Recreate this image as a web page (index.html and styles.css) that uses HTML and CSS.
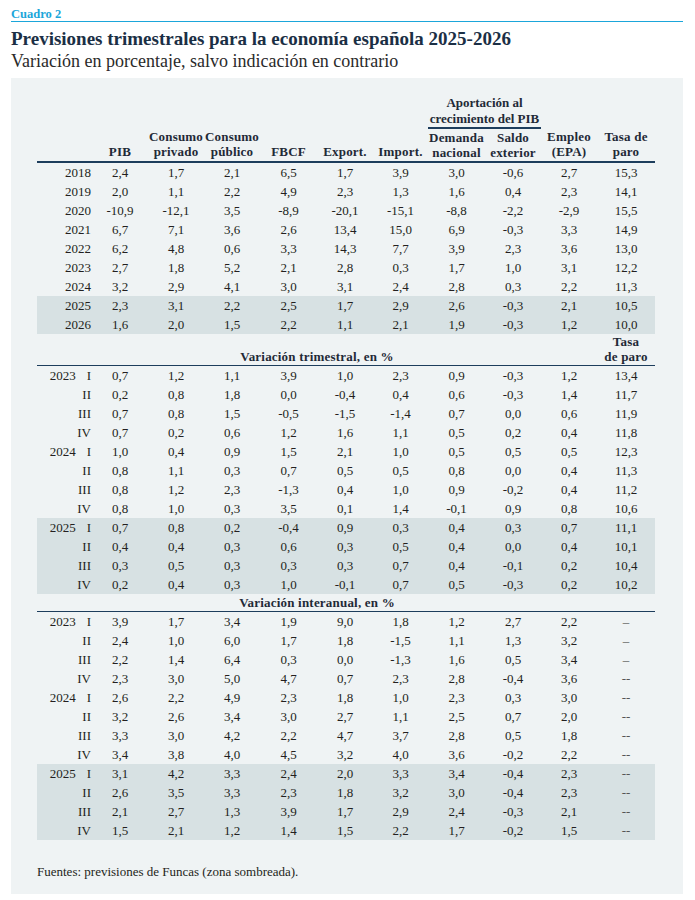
FILE: index.html
```html
<!DOCTYPE html>
<html lang="es">
<head>
<meta charset="utf-8">
<title>Cuadro 2</title>
<link rel="stylesheet" href="styles.css">
</head>
<body>
<div class="page">
  <div class="kicker">Cuadro 2</div>
  <h1 class="title">Previsiones trimestrales para la economía española 2025-2026</h1>
  <p class="subtitle">Variación en porcentaje, salvo indicación en contrario</p>
  <div class="panel">
    <table class="data">
      <colgroup>
        <col class="c-lab"><col class="c56"><col class="c56"><col class="c56"><col class="c57"><col class="c56"><col class="c55"><col class="c57"><col class="c56"><col class="c56"><col class="c58">
      </colgroup>
      <thead>
        <tr class="hr1">
          <th rowspan="2" class="hb"></th>
          <th rowspan="2" class="hb">PIB</th>
          <th rowspan="2" class="hb">Consumo<br>privado</th>
          <th rowspan="2" class="hb">Consumo<br>público</th>
          <th rowspan="2" class="hb">FBCF</th>
          <th rowspan="2" class="hb">Export.</th>
          <th rowspan="2" class="hb">Import.</th>
          <th colspan="2" class="group">Aportación al<br>crecimiento del PIB</th>
          <th rowspan="2" class="hb">Empleo<br>(EPA)</th>
          <th rowspan="2" class="hb">Tasa de<br>paro</th>
        </tr>
        <tr class="hr2">
          <th class="hb">Demanda<br>nacional</th>
          <th class="hb">Saldo<br>exterior</th>
        </tr>
      </thead>
      <tbody>
        <tr><td class="lab">2018</td><td>2,4</td><td>1,7</td><td>2,1</td><td>6,5</td><td>1,7</td><td>3,9</td><td>3,0</td><td>-0,6</td><td>2,7</td><td>15,3</td></tr>
        <tr><td class="lab">2019</td><td>2,0</td><td>1,1</td><td>2,2</td><td>4,9</td><td>2,3</td><td>1,3</td><td>1,6</td><td>0,4</td><td>2,3</td><td>14,1</td></tr>
        <tr><td class="lab">2020</td><td>-10,9</td><td>-12,1</td><td>3,5</td><td>-8,9</td><td>-20,1</td><td>-15,1</td><td>-8,8</td><td>-2,2</td><td>-2,9</td><td>15,5</td></tr>
        <tr><td class="lab">2021</td><td>6,7</td><td>7,1</td><td>3,6</td><td>2,6</td><td>13,4</td><td>15,0</td><td>6,9</td><td>-0,3</td><td>3,3</td><td>14,9</td></tr>
        <tr><td class="lab">2022</td><td>6,2</td><td>4,8</td><td>0,6</td><td>3,3</td><td>14,3</td><td>7,7</td><td>3,9</td><td>2,3</td><td>3,6</td><td>13,0</td></tr>
        <tr><td class="lab">2023</td><td>2,7</td><td>1,8</td><td>5,2</td><td>2,1</td><td>2,8</td><td>0,3</td><td>1,7</td><td>1,0</td><td>3,1</td><td>12,2</td></tr>
        <tr><td class="lab">2024</td><td>3,2</td><td>2,9</td><td>4,1</td><td>3,0</td><td>3,1</td><td>2,4</td><td>2,8</td><td>0,3</td><td>2,2</td><td>11,3</td></tr>
        <tr class="shade"><td class="lab">2025</td><td>2,3</td><td>3,1</td><td>2,2</td><td>2,5</td><td>1,7</td><td>2,9</td><td>2,6</td><td>-0,3</td><td>2,1</td><td>10,5</td></tr>
        <tr class="shade"><td class="lab">2026</td><td>1,6</td><td>2,0</td><td>1,5</td><td>2,2</td><td>1,1</td><td>2,1</td><td>1,9</td><td>-0,3</td><td>1,2</td><td>10,0</td></tr>
      </tbody>
      <tbody>
        <tr class="sec sec-tall"><th colspan="10">Variación trimestral, en %</th><th>Tasa<br>de paro</th></tr>
        <tr><td class="lab"><span class="yr">2023</span>I</td><td>0,7</td><td>1,2</td><td>1,1</td><td>3,9</td><td>1,0</td><td>2,3</td><td>0,9</td><td>-0,3</td><td>1,2</td><td>13,4</td></tr>
        <tr><td class="lab">II</td><td>0,2</td><td>0,8</td><td>1,8</td><td>0,0</td><td>-0,4</td><td>0,4</td><td>0,6</td><td>-0,3</td><td>1,4</td><td>11,7</td></tr>
        <tr><td class="lab">III</td><td>0,7</td><td>0,8</td><td>1,5</td><td>-0,5</td><td>-1,5</td><td>-1,4</td><td>0,7</td><td>0,0</td><td>0,6</td><td>11,9</td></tr>
        <tr><td class="lab">IV</td><td>0,7</td><td>0,2</td><td>0,6</td><td>1,2</td><td>1,6</td><td>1,1</td><td>0,5</td><td>0,2</td><td>0,4</td><td>11,8</td></tr>
        <tr><td class="lab"><span class="yr">2024</span>I</td><td>1,0</td><td>0,4</td><td>0,9</td><td>1,5</td><td>2,1</td><td>1,0</td><td>0,5</td><td>0,5</td><td>0,5</td><td>12,3</td></tr>
        <tr><td class="lab">II</td><td>0,8</td><td>1,1</td><td>0,3</td><td>0,7</td><td>0,5</td><td>0,5</td><td>0,8</td><td>0,0</td><td>0,4</td><td>11,3</td></tr>
        <tr><td class="lab">III</td><td>0,8</td><td>1,2</td><td>2,3</td><td>-1,3</td><td>0,4</td><td>1,0</td><td>0,9</td><td>-0,2</td><td>0,4</td><td>11,2</td></tr>
        <tr><td class="lab">IV</td><td>0,8</td><td>1,0</td><td>0,3</td><td>3,5</td><td>0,1</td><td>1,4</td><td>-0,1</td><td>0,9</td><td>0,8</td><td>10,6</td></tr>
        <tr class="shade"><td class="lab"><span class="yr">2025</span>I</td><td>0,7</td><td>0,8</td><td>0,2</td><td>-0,4</td><td>0,9</td><td>0,3</td><td>0,4</td><td>0,3</td><td>0,7</td><td>11,1</td></tr>
        <tr class="shade"><td class="lab">II</td><td>0,4</td><td>0,4</td><td>0,3</td><td>0,6</td><td>0,3</td><td>0,5</td><td>0,4</td><td>0,0</td><td>0,4</td><td>10,1</td></tr>
        <tr class="shade"><td class="lab">III</td><td>0,3</td><td>0,5</td><td>0,3</td><td>0,3</td><td>0,3</td><td>0,7</td><td>0,4</td><td>-0,1</td><td>0,2</td><td>10,4</td></tr>
        <tr class="shade"><td class="lab">IV</td><td>0,2</td><td>0,4</td><td>0,3</td><td>1,0</td><td>-0,1</td><td>0,7</td><td>0,5</td><td>-0,3</td><td>0,2</td><td>10,2</td></tr>
      </tbody>
      <tbody>
        <tr class="sec sec-short"><th colspan="10">Variación interanual, en %</th><th></th></tr>
        <tr><td class="lab"><span class="yr">2023</span>I</td><td>3,9</td><td>1,7</td><td>3,4</td><td>1,9</td><td>9,0</td><td>1,8</td><td>1,2</td><td>2,7</td><td>2,2</td><td class="na">–</td></tr>
        <tr><td class="lab">II</td><td>2,4</td><td>1,0</td><td>6,0</td><td>1,7</td><td>1,8</td><td>-1,5</td><td>1,1</td><td>1,3</td><td>3,2</td><td class="na">–</td></tr>
        <tr><td class="lab">III</td><td>2,2</td><td>1,4</td><td>6,4</td><td>0,3</td><td>0,0</td><td>-1,3</td><td>1,6</td><td>0,5</td><td>3,4</td><td class="na">–</td></tr>
        <tr><td class="lab">IV</td><td>2,3</td><td>3,0</td><td>5,0</td><td>4,7</td><td>0,7</td><td>2,3</td><td>2,8</td><td>-0,4</td><td>3,6</td><td class="na">--</td></tr>
        <tr><td class="lab"><span class="yr">2024</span>I</td><td>2,6</td><td>2,2</td><td>4,9</td><td>2,3</td><td>1,8</td><td>1,0</td><td>2,3</td><td>0,3</td><td>3,0</td><td class="na">--</td></tr>
        <tr><td class="lab">II</td><td>3,2</td><td>2,6</td><td>3,4</td><td>3,0</td><td>2,7</td><td>1,1</td><td>2,5</td><td>0,7</td><td>2,0</td><td class="na">--</td></tr>
        <tr><td class="lab">III</td><td>3,3</td><td>3,0</td><td>4,2</td><td>2,2</td><td>4,7</td><td>3,7</td><td>2,8</td><td>0,5</td><td>1,8</td><td class="na">--</td></tr>
        <tr><td class="lab">IV</td><td>3,4</td><td>3,8</td><td>4,0</td><td>4,5</td><td>3,2</td><td>4,0</td><td>3,6</td><td>-0,2</td><td>2,2</td><td class="na">--</td></tr>
        <tr class="shade"><td class="lab"><span class="yr">2025</span>I</td><td>3,1</td><td>4,2</td><td>3,3</td><td>2,4</td><td>2,0</td><td>3,3</td><td>3,4</td><td>-0,4</td><td>2,3</td><td class="na">--</td></tr>
        <tr class="shade"><td class="lab">II</td><td>2,6</td><td>3,5</td><td>3,3</td><td>2,3</td><td>1,8</td><td>3,2</td><td>3,0</td><td>-0,4</td><td>2,3</td><td class="na">--</td></tr>
        <tr class="shade"><td class="lab">III</td><td>2,1</td><td>2,7</td><td>1,3</td><td>3,9</td><td>1,7</td><td>2,9</td><td>2,4</td><td>-0,3</td><td>2,1</td><td class="na">--</td></tr>
        <tr class="shade"><td class="lab">IV</td><td>1,5</td><td>2,1</td><td>1,2</td><td>1,4</td><td>1,5</td><td>2,2</td><td>1,7</td><td>-0,2</td><td>1,5</td><td class="na">--</td></tr>
      </tbody>
    </table>
    <p class="source">Fuentes: previsiones de Funcas (zona sombreada).</p>
  </div>
</div>
</body>
</html>
```

FILE: styles.css
```css
html, body {
  margin: 0;
  padding: 0;
  background: #ffffff;
}

body {
  font-family: "Liberation Serif", "DejaVu Serif", serif;
  color: #231f20;
}

.page {
  width: 672px;
  padding: 8px 0 0 11px;
}

.kicker {
  font-size: 12.5px;
  font-weight: bold;
  color: #1ba6da;
  line-height: 13px;
  padding-bottom: 0;
  border-bottom: 1px solid #1ba6da;
}

.title {
  margin: 6px 0 0;
  font-size: 19px;
  font-weight: bold;
  color: #1b2f45;
  line-height: 22px;
}

.subtitle {
  margin: 0;
  font-size: 18px;
  line-height: 22px;
  color: #2a2a2a;
}

.panel {
  margin-top: 6px;
  background: #eff3f4;
  padding: 17px 28px 13px 26px;
}

.data {
  width: 618px;
  border-collapse: separate;
  border-spacing: 0;
  table-layout: fixed;
  font-size: 13px;
}

.c-lab { width: 55px; }
.c55 { width: 55px; }
.c56 { width: 56px; }
.c57 { width: 57px; }
.c58 { width: 58px; }

th {
  font-weight: bold;
  color: #1f2a37;
  letter-spacing: 0.2px;
  padding: 0;
  white-space: nowrap;
}

.hr1 th {
  line-height: 15.5px;
}

.hb {
  vertical-align: bottom;
  line-height: 15px;
  padding: 1px 0 1.5px;
  border-bottom: 2px solid #1d3d5c;
}

.group {
  vertical-align: bottom;
  border-bottom: 2px solid #1d3d5c;
  padding: 0 0 0.5px;
  letter-spacing: 0;
}

td {
  text-align: center;
  line-height: 19px;
  height: 19px;
  padding: 0;
  white-space: nowrap;
}

td.lab {
  text-align: right;
  padding-right: 1px;
}

.yr {
  margin-right: 11px;
}

.shade td {
  background: #d7e1e3;
}

.sec th {
  vertical-align: bottom;
  text-align: center;
  border-bottom: 1.5px solid #1d3d5c;
}

.sec-tall th {
  line-height: 15px;
  padding-bottom: 1px;
}

.sec-short th {
  line-height: 17px;
}

.na {
  color: #555;
}

.source {
  margin: 22px 0 0;
  font-size: 13px;
  line-height: 19px;
  color: #231f20;
}
```
